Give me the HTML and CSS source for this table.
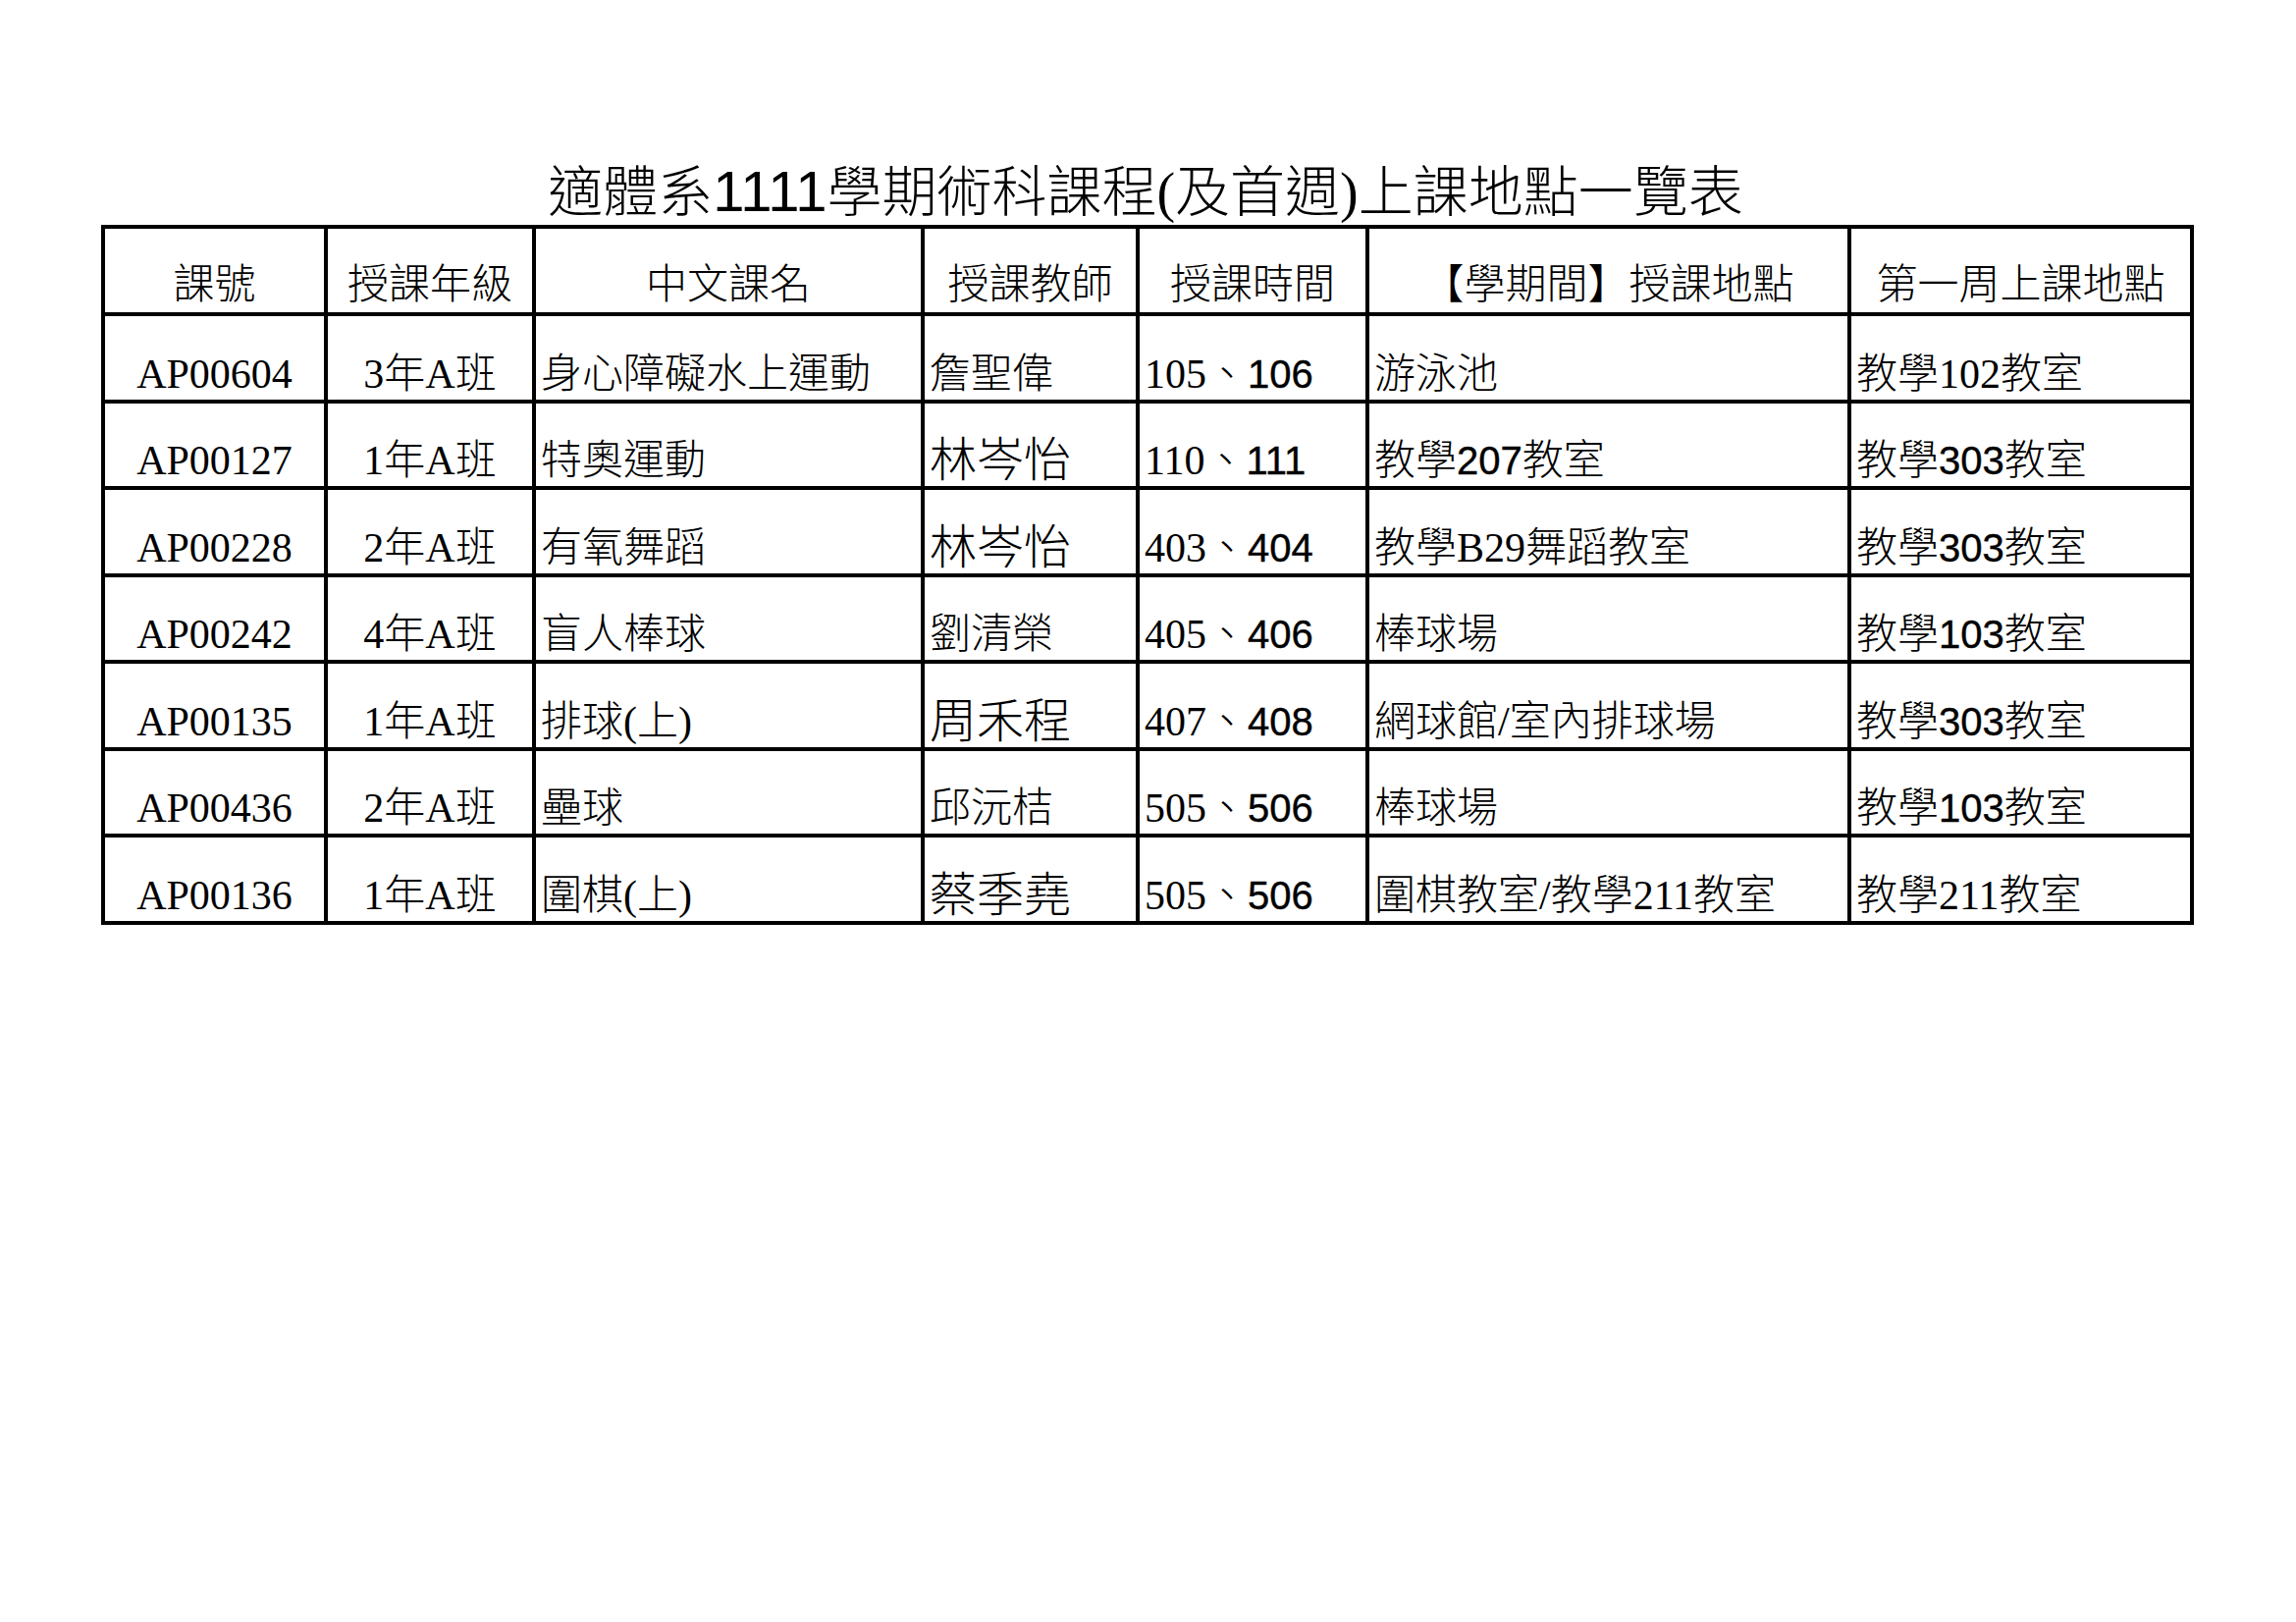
FILE: index.html
```html
<!DOCTYPE html>
<html lang="zh-Hant">
<head>
<meta charset="utf-8">
<title>適體系1111學期術科課程(及首週)上課地點一覽表</title>
<link rel="stylesheet" href="styles.css">
</head>
<body>
<div class="page">
  <div class="sheet">
    <h1 class="title">適體系<span class="a">1111</span>學期術科課程(及首週)上課地點一覽表</h1>
    <table class="grid">
      <colgroup>
        <col class="c1"><col class="c2"><col class="c3"><col class="c4"><col class="c5"><col class="c6"><col class="c7">
      </colgroup>
      <thead>
        <tr>
          <th>課號</th>
          <th>授課年級</th>
          <th>中文課名</th>
          <th>授課教師</th>
          <th>授課時間</th>
          <th>【學期間】授課地點</th>
          <th>第一周上課地點</th>
        </tr>
      </thead>
      <tbody>
        <tr>
          <td class="ctr">AP00604</td>
          <td class="ctr">3年A班</td>
          <td>身心障礙水上運動</td>
          <td>詹聖偉</td>
          <td>105、<span class="a">106</span></td>
          <td>游泳池</td>
          <td>教學102教室</td>
        </tr>
        <tr>
          <td class="ctr">AP00127</td>
          <td class="ctr">1年A班</td>
          <td>特奧運動</td>
          <td class="big">林岑怡</td>
          <td>110、<span class="a">111</span></td>
          <td>教學<span class="a">207</span>教室</td>
          <td>教學<span class="a">303</span>教室</td>
        </tr>
        <tr>
          <td class="ctr">AP00228</td>
          <td class="ctr">2年A班</td>
          <td>有氧舞蹈</td>
          <td class="big">林岑怡</td>
          <td>403、<span class="a">404</span></td>
          <td>教學B29舞蹈教室</td>
          <td>教學<span class="a">303</span>教室</td>
        </tr>
        <tr>
          <td class="ctr">AP00242</td>
          <td class="ctr">4年A班</td>
          <td>盲人棒球</td>
          <td>劉清榮</td>
          <td>405、<span class="a">406</span></td>
          <td>棒球場</td>
          <td>教學<span class="a">103</span>教室</td>
        </tr>
        <tr>
          <td class="ctr">AP00135</td>
          <td class="ctr">1年A班</td>
          <td>排球(上)</td>
          <td class="big">周禾程</td>
          <td>407、<span class="a">408</span></td>
          <td>網球館/室內排球場</td>
          <td>教學<span class="a">303</span>教室</td>
        </tr>
        <tr>
          <td class="ctr">AP00436</td>
          <td class="ctr">2年A班</td>
          <td>壘球</td>
          <td>邱沅桔</td>
          <td>505、<span class="a">506</span></td>
          <td>棒球場</td>
          <td>教學<span class="a">103</span>教室</td>
        </tr>
        <tr>
          <td class="ctr">AP00136</td>
          <td class="ctr">1年A班</td>
          <td>圍棋(上)</td>
          <td class="big">蔡季堯</td>
          <td>505、<span class="a">506</span></td>
          <td>圍棋教室/教學211教室</td>
          <td>教學211教室</td>
        </tr>
      </tbody>
    </table>
  </div>
</div>
</body>
</html>
```

FILE: styles.css
```css
html, body {
  margin: 0;
  padding: 0;
  background: #ffffff;
  color: #000000;
}

body {
  font-family: "Liberation Serif", "Noto Sans CJK TC", serif;
  font-weight: 300;
}

.page {
  padding: 165px 0 0 103px;
}

.sheet {
  width: 2128px;
}

.title {
  margin: 0 0 3px 0;
  font-family: "Liberation Serif", "Noto Sans CJK TC", serif;
  font-weight: 300;
  font-size: 56px;
  line-height: 60px;
  text-align: center;
  white-space: nowrap;
}

.title .a {
  font-family: "Liberation Sans", "Noto Sans CJK TC", sans-serif;
  font-size: 58px;
  font-weight: 400;
}

.grid {
  border-collapse: collapse;
  table-layout: fixed;
  width: 2128px;
}

.c1 { width: 227px; }
.c2 { width: 212px; }
.c3 { width: 396px; }
.c4 { width: 219px; }
.c5 { width: 234px; }
.c6 { width: 491px; }
.c7 { width: 349px; }

.grid th,
.grid td {
  border: 4px solid #000000;
  vertical-align: bottom;
  font-size: 42px;
  line-height: 46px;
  white-space: nowrap;
  overflow: hidden;
}

.grid th {
  font-weight: 300;
  text-align: center;
  padding: 0 4px 5px 4px;
}

.grid thead tr {
  height: 89px;
}

.grid tbody tr {
  height: 88.57px;
}

.grid td {
  text-align: left;
  padding: 0 5px 3px 5px;
}

.grid td.ctr {
  text-align: center;
}

.grid td.big {
  font-size: 48px;
}

.grid .a {
  font-family: "Liberation Sans", "Noto Sans CJK TC", sans-serif;
  font-size: 40px;
  font-weight: 400;
  -webkit-text-stroke: 0.4px #000000;
}
```
